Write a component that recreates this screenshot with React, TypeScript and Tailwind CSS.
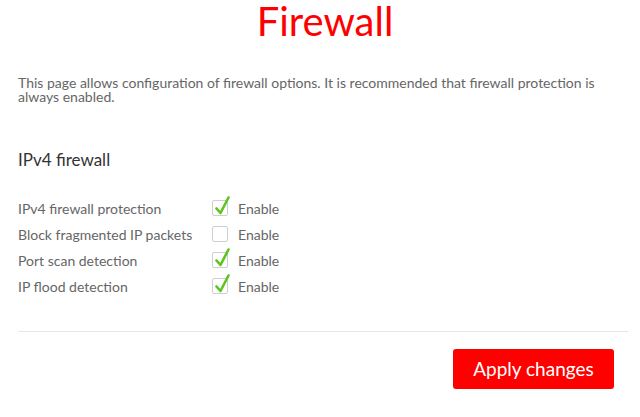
import React from "react";

function Check({ checked }: { checked: boolean }) {
  return (
    <span className="relative inline-block w-4 h-4 border border-[#cfcfcf] rounded-[2px] bg-white">
      {checked && (
        <svg
          className="absolute left-[1px] top-[-5px]"
          width="16"
          height="20"
          viewBox="0 0 16 20"
        >
          <path
            d="M2.5 12.5 L6.5 17 L14.5 1.5"
            fill="none"
            stroke="#5cc520"
            strokeWidth="2.6"
            strokeLinecap="round"
            strokeLinejoin="round"
          />
        </svg>
      )}
    </span>
  );
}

const rows = [
  { label: "IPv4 firewall protection", checked: true },
  { label: "Block fragmented IP packets", checked: false },
  { label: "Port scan detection", checked: true },
  { label: "IP flood detection", checked: true },
];

export default function App() {
  return (
    <div
      className="w-[640px] h-[417px] bg-white pl-[18px] pr-[12px] overflow-hidden"
      style={{ fontFamily: "Lato, 'Open Sans', sans-serif" }}
    >
      <h1 className="text-center text-[40px] leading-[40px] pt-[1px] text-[#ff0000] font-normal pl-[4px]">
        Firewall
      </h1>
      <p className="mt-[35px] text-[14px] leading-[14px] text-[#666] pr-[12px]">
        This page allows configuration of firewall options. It is recommended that firewall protection is always enabled.
      </p>
      <h2 className="mt-[46px] text-[17px] leading-[20px] text-[#333]">IPv4 firewall</h2>
      <div className="mt-[25px] flex flex-col">
        {rows.map((r) => (
          <div key={r.label} className="flex items-center h-[26px] text-[14px] text-[#666]">
            <span className="w-[194px]">{r.label}</span>
            <Check checked={r.checked} />
            <span className="ml-[10px]">Enable</span>
          </div>
        ))}
      </div>
      <div className="mt-[32px] border-t border-[#e6e6e6]" />
      <div className="mt-[17px] flex justify-end pr-[14px]">
        <button className="w-[161px] h-[40px] bg-[#ff0000] text-white text-[19px] rounded-[3px]">
          Apply changes
        </button>
      </div>
    </div>
  );
}
